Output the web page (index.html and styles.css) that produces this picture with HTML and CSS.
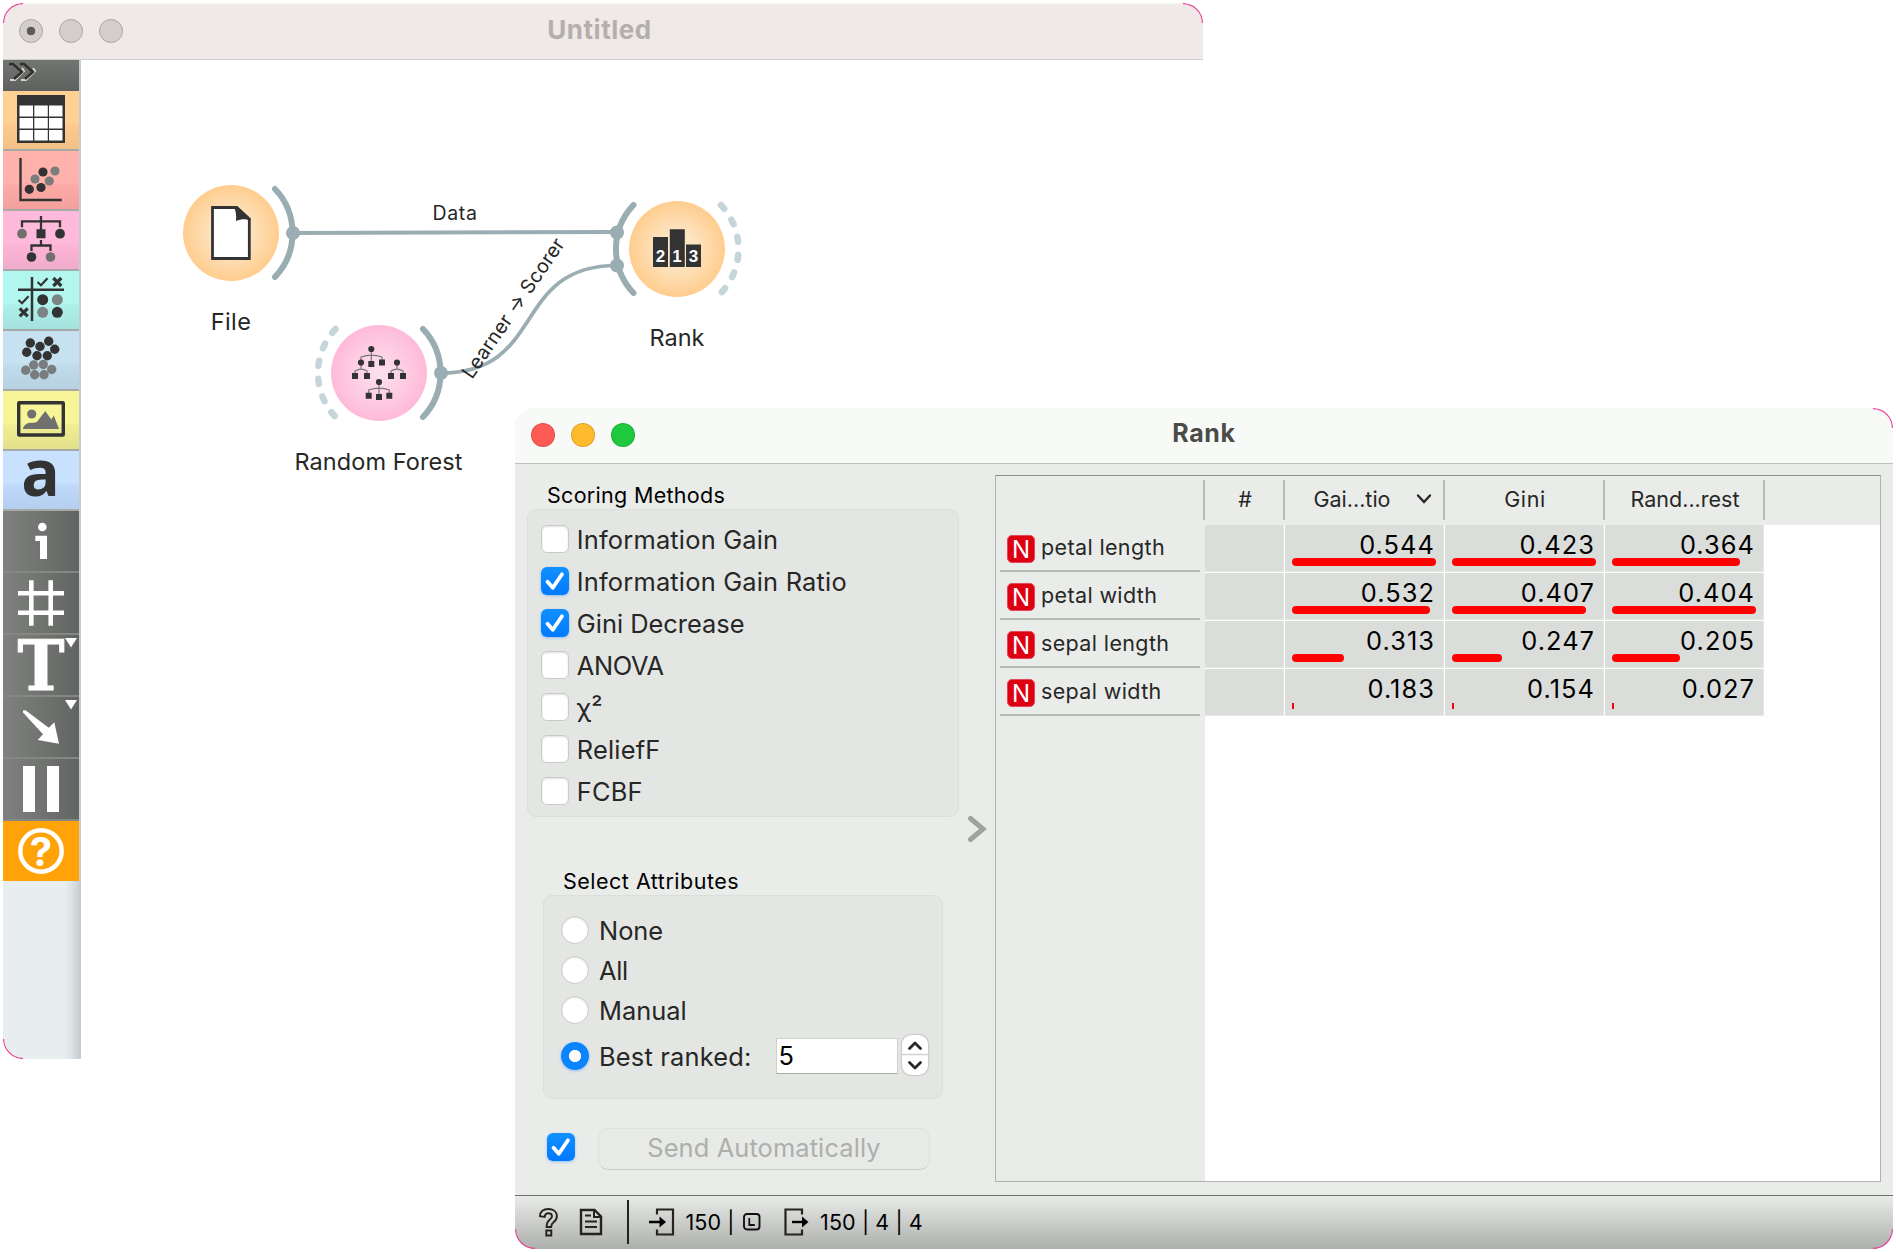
FILE: index.html
```html
<!DOCTYPE html>
<html lang="en">
<head>
<meta charset="utf-8">
<title>Untitled</title>
<link rel="stylesheet" href="styles.css">
</head>
<body>
<main class="desktop">

<section class="window workflow">
  <header class="titlebar titlebar-inactive">
    <div class="lights"><i class="light light-off light-edited"></i><i class="light light-off"></i><i class="light light-off"></i></div>
    <h1 class="title title-doc">Untitled</h1>
  </header>
  <div class="workspace">
    <nav class="toolbox">
      <div class="collapse">
        <svg width="76" height="31" viewBox="0 0 76 31" fill="none"><g stroke="#d4d6d3" stroke-width="2"><path d="M7 20h5l9-9-2-3M18 20h5l9-9-2-3"/></g><g stroke="#2f302e" stroke-width="2.4"><path d="M6 4h4l9 8-8 7M17 4h4l9 8-8 7"/></g></svg>
      </div>
      <button class="tool tool-data"><svg viewBox="0 0 76 58"><path fill="#333" d="M14 4h48v48H14z"/><path fill="#fff" d="M16.500 14.500h13.500v11H16.500zM31.300 14.500h13.500v11H31.300zM46 14.500h13.500v11H46zM16.500 27h13.500v10.500H16.500zM31.300 27h13.500v10.500H31.300zM46 27h13.500v10.500H46zM16.500 39h13.500v10.500H16.500zM31.300 39h13.500v10.500H31.300zM46 39h13.500v10.500H46z"/></svg></button>
      <button class="tool tool-visualize"><svg viewBox="0 0 76 58"><path d="M17.500 7v42h41.200" fill="none" stroke="#333" stroke-width="2.400"/><g fill="#333"><circle cx="26.300" cy="38.300" r="4.600"/><circle cx="38" cy="36.500" r="4.600"/><circle cx="40" cy="21" r="4.600"/></g><g fill="#7b7d7c"><circle cx="32" cy="28" r="4.600"/><circle cx="46.300" cy="30" r="4.600"/><circle cx="52" cy="20" r="4.600"/></g></svg></button>
      <button class="tool tool-model"><svg viewBox="0 0 76 58"><path d="M38 5v18M19 16.300V10.300h38v6M38 29v6M28.500 40v-5.500h19V40" fill="none" stroke="#333" stroke-width="2.300"/><path fill="#333" d="M33.500 18.200h9v9h-9z"/><circle cx="19" cy="22.700" r="4.900" fill="#70716f"/><circle cx="57" cy="22.700" r="4.900" fill="#333"/><circle cx="28.500" cy="46" r="4.800" fill="#333"/><circle cx="47.500" cy="46" r="4.800" fill="#70716f"/></svg></button>
      <button class="tool tool-evaluate"><svg viewBox="0 0 76 58"><g fill="none" stroke="#333"><path d="M29 6v44M15 18.700h46" stroke-width="2.500"/><path d="M34.500 11l3.500 3.300 6.500-7M15.500 29l3.500 3.300 6.500-7" stroke-width="2.200"/><path d="M50.300 7l8 8m0-8l-8 8M16.700 37.300l8 8m0-8l-8 8" stroke-width="3.200"/></g><circle cx="39.700" cy="28.700" r="5.500" fill="#333"/><circle cx="54.300" cy="28.700" r="5.500" fill="#7b8483"/><circle cx="39.700" cy="41.300" r="5.500" fill="#7b8483"/><circle cx="54.300" cy="41.300" r="5.500" fill="#333"/></svg></button>
      <button class="tool tool-unsupervised"><svg viewBox="0 0 76 58"><g fill="#333"><circle cx="27.300" cy="12" r="4.700"/><circle cx="45.700" cy="10.300" r="4.700"/><circle cx="37" cy="15.500" r="4.700"/><circle cx="23.700" cy="21.300" r="4.700"/><circle cx="51.700" cy="18.300" r="4.700"/><circle cx="34" cy="24.700" r="4.700"/><circle cx="44.300" cy="24.700" r="4.700"/></g><g fill="#7a7c7d"><circle cx="30.700" cy="34" r="4.700"/><circle cx="40.300" cy="33.500" r="4.700"/><circle cx="22.700" cy="39.300" r="4.700"/><circle cx="48.700" cy="38.500" r="4.700"/><circle cx="31.700" cy="43.700" r="4.700"/><circle cx="41" cy="43.700" r="4.700"/></g></svg></button>
      <button class="tool tool-image"><svg viewBox="0 0 76 58"><rect x="15.700" y="11.700" width="44.600" height="32.300" rx=".5" fill="none" stroke="#333" stroke-width="3.400"/><g fill="#70716f"><circle cx="28.700" cy="23" r="4.600"/><path d="M20 38v-1c1.500-3.500 4.500-5.500 8-5.300 3 .3 5-.1 6.300-1.200L42.300 20l5.900 8.600 2.600-4.200L56 38z"/></g></svg></button>
      <button class="tool tool-text"><svg viewBox="0 0 76 58"><text x="37.500" y="44.500" class="glyph-a">a</text></svg></button>
      <button class="tool tool-dark"><svg viewBox="0 0 76 60"><g fill="#fff"><circle cx="39.300" cy="16" r="4.300"/><path d="M32.300 24.700H44V48h-7V30h-4.700z"/></g></svg></button>
      <button class="tool tool-dark"><svg viewBox="0 0 76 60"><path d="M28.300 7.300v45.400M47.700 7.300v45.400M15 20.300h46M15 39.700h46" stroke="#fff" stroke-width="4.600"/></svg></button>
      <button class="tool tool-dark"><svg viewBox="0 0 76 60"><text x="38" y="55" class="glyph-t" textLength="47" lengthAdjust="spacingAndGlyphs">T</text><path fill="#fff" d="M62 3h12l-6 9.500z"/></svg></button>
      <button class="tool tool-dark"><svg viewBox="0 0 76 60"><path fill="#fff" d="M20 13.500l2.500-.3 23.200 17.500 5.600-5.400L56 46.700 34.700 43l5.300-5.700L20 15.500zM62 3h12l-6 9.500z"/></svg></button>
      <button class="tool tool-dark"><svg viewBox="0 0 76 60"><path fill="#fff" d="M20 7h12v46H20zM44 7h12v46H44z"/></svg></button>
      <button class="tool tool-help"><svg viewBox="0 0 76 60"><circle cx="38" cy="30" r="20.700" fill="none" stroke="#fff" stroke-width="4.400"/><text x="38" y="44.500" class="glyph-q">?</text></svg></button>
    </nav>
    <svg class="canvas" width="1122" height="999" viewBox="81 60 1122 999">
      <defs>
        <radialGradient id="orange"><stop offset="0" stop-color="#fdebd4"/><stop offset=".4" stop-color="#fde3c0"/><stop offset="1" stop-color="#ffcd8e"/></radialGradient>
        <radialGradient id="pink"><stop offset="0" stop-color="#fbe0ed"/><stop offset=".4" stop-color="#fdd3e6"/><stop offset="1" stop-color="#ffbad9"/></radialGradient>
      </defs>
      <g fill="none" stroke="#9aadb3" stroke-width="4">
        <path d="M293 233L617 232"/>
        <path stroke-width="3.700" d="M441 373C547 373 511 265.500 617 265.500"/>
      </g>
      <g fill="none" stroke="#9aadb3" stroke-width="6" stroke-linecap="round">
        <path d="M275 189A64 64 0 0 1 275 277"/>
        <path d="M423 329A64 64 0 0 1 423 417"/>
        <path d="M633.500 205A64 64 0 0 0 633.500 293"/>
      </g>
      <g fill="none" stroke="#c6d4db" stroke-width="6.500" stroke-linecap="round" stroke-dasharray="5 13.100">
        <path d="M335.500 329A64 64 0 0 0 335.500 417"/>
        <path d="M721 205A64 64 0 0 1 721 293"/>
      </g>
      <g fill="#9aadb3"><circle cx="293" cy="233" r="7"/><circle cx="441" cy="373" r="7"/><circle cx="617" cy="232.500" r="7"/><circle cx="617" cy="265.500" r="7"/></g>
      <circle cx="231" cy="233" r="48" fill="url(#orange)"/>
      <circle cx="379" cy="373" r="48" fill="url(#pink)"/>
      <circle cx="677" cy="249" r="48" fill="url(#orange)"/>
      <path d="M212.500 207.500h24.300L249.300 219v39.500h-36.800z" fill="#fff" stroke="#333" stroke-width="2.800"/>
      <path d="M234 207h3.500l13 11.500v2.500c-4-2.500-9-2.500-14.500 0 .6-6-.4-10.500-2-14z" fill="#333"/>
      <g fill="none" stroke="#777" stroke-width="1.200">
        <path d="M371.300 349v14M361 362v-5q5-1.800 10.300-1.800T382 357v5M361 362v7M355 376v-5q3-1.800 6-1.800t6 1.800v5M397 362v7M391 376v-5q3-1.800 6-1.800t6 1.800v5M379 382v14M368.700 395v-5q5-1.800 10.300-1.800t10.300 1.800v5"/>
      </g>
      <g fill="#333"><circle cx="371.300" cy="349" r="3.100"/><circle cx="361" cy="362.500" r="3.100"/><circle cx="397" cy="362.500" r="3.100"/><circle cx="379" cy="382" r="3.100"/>
        <path d="M368.300 361h6v6h-6zM379 359.500h6v6h-6zM352 373h6v6h-6zM364 373h6v6h-6zM388 373h6v6h-6zM400 373h6v6h-6zM365.700 392.700h6v6h-6zM376 394h6v6h-6zM386.300 392.700h6v6h-6z"/></g>
      <path d="M653 237h15v30h-15zM669.800 229.300h15V267h-15zM686 244.500h15V267h-15z" fill="#333"/>
      <g class="podium"><text x="660.600" y="261.700">2</text><text x="677" y="261.700">1</text><text x="693.600" y="261.700">3</text></g>
      <g class="node-label">
        <text x="231" y="330" letter-spacing=".4">File</text>
        <text x="378.500" y="470" letter-spacing=".08">Random Forest</text>
        <text x="677" y="345.700">Rank</text>
      </g>
      <g class="link-label">
        <text x="455" y="220">Data</text>
        <text class="link-label-start" transform="translate(472 380) rotate(-55.500)">Learner → Scorer</text>
      </g>
    </svg>
  </div>
  <svg class="corner corner-tl" viewBox="0 0 20 20"><path d="M.5 20A19.500 19.500 0 0 1 20 .5"/></svg>
  <svg class="corner corner-tr" viewBox="0 0 20 20"><path d="M0 .5A19.500 19.500 0 0 1 19.500 20"/></svg>
  <svg class="corner corner-bl" viewBox="0 0 20 20"><path d="M.5 0A19.500 19.500 0 0 0 20 19.500"/></svg>
</section>

<section class="window rank">
  <header class="titlebar">
    <div class="lights"><i class="light light-close"></i><i class="light light-min"></i><i class="light light-zoom"></i></div>
    <h2 class="title">Rank</h2>
  </header>
  <div class="body">
    <aside class="controls">
      <h3 class="group-title">Scoring Methods</h3>
      <div class="group scoring">
        <label class="option"><span class="check"></span><span class="option-text spaced">Information Gain</span></label>
        <label class="option"><span class="check on"><svg viewBox="0 0 28 28"><path d="M6.500 14.800l5.300 6L21 7.200"/></svg></span><span class="option-text spaced">Information Gain Ratio</span></label>
        <label class="option"><span class="check on"><svg viewBox="0 0 28 28"><path d="M6.500 14.800l5.300 6L21 7.200"/></svg></span><span class="option-text">Gini Decrease</span></label>
        <label class="option"><span class="check"></span><span class="option-text tight">ANOVA</span></label>
        <label class="option"><span class="check"></span><span class="option-text">χ²</span></label>
        <label class="option"><span class="check"></span><span class="option-text spaced">ReliefF</span></label>
        <label class="option"><span class="check"></span><span class="option-text spaced">FCBF</span></label>
      </div>
      <h3 class="group-title select-title">Select Attributes</h3>
      <div class="group select">
        <label class="option"><span class="radio"></span><span class="option-text">None</span></label>
        <label class="option"><span class="radio"></span><span class="option-text tight">All</span></label>
        <label class="option"><span class="radio"></span><span class="option-text">Manual</span></label>
        <div class="option best"><span class="radio on"></span><span class="option-text spaced">Best ranked:</span>
          <span class="number">5</span>
          <span class="stepper"><svg viewBox="0 0 26 40"><path d="M0 19.500h26" stroke="#d2d3d1" stroke-width="1.500"/><path d="M7.500 13.500L13 8l5.500 5.500M7.500 27.500L13 33l5.500-5.500" fill="none" stroke="#262726" stroke-width="2.800" stroke-linecap="round" stroke-linejoin="round"/></svg></span>
        </div>
      </div>
      <div class="send"><span class="check on"><svg viewBox="0 0 28 28"><path d="M6.500 14.800l5.300 6L21 7.200"/></svg></span><button class="send-button">Send Automatically</button></div>
    </aside>
    <div class="splitter"><svg width="20" height="28" viewBox="0 0 20 28"><path d="M3.500 3.500L16 14 3.500 24.500" fill="none" stroke="#a0a29f" stroke-width="5" stroke-linecap="round"/></svg></div>
    <div class="table">
      <div class="row head">
        <div class="stub"></div>
        <div class="col narrow">#</div>
        <div class="col sorted"><span>Gai...tio</span><svg width="16" height="12" viewBox="0 0 16 12"><path d="M2 2.500L8 9l6-6.500" fill="none" stroke="#262726" stroke-width="2.400" stroke-linecap="round"/></svg></div>
        <div class="col gini">Gini</div>
        <div class="col">Rand...rest</div>
      </div>
      <div class="row">
        <div class="name"><span class="badge">N</span>petal length</div>
        <div class="cell narrow"></div>
        <div class="cell">0.544<i class="bar" style="width:144px"></i></div>
        <div class="cell">0.423<i class="bar" style="width:144px"></i></div>
        <div class="cell">0.364<i class="bar" style="width:128px"></i></div>
      </div>
      <div class="row">
        <div class="name"><span class="badge">N</span>petal width</div>
        <div class="cell narrow"></div>
        <div class="cell">0.532<i class="bar" style="width:138px"></i></div>
        <div class="cell">0.407<i class="bar" style="width:134px"></i></div>
        <div class="cell">0.404<i class="bar" style="width:144px"></i></div>
      </div>
      <div class="row">
        <div class="name"><span class="badge">N</span>sepal length</div>
        <div class="cell narrow"></div>
        <div class="cell">0.313<i class="bar" style="width:52px"></i></div>
        <div class="cell">0.247<i class="bar" style="width:50px"></i></div>
        <div class="cell">0.205<i class="bar" style="width:68px"></i></div>
      </div>
      <div class="row">
        <div class="name"><span class="badge">N</span>sepal width</div>
        <div class="cell narrow"></div>
        <div class="cell">0.183<i class="bar bar-min"></i></div>
        <div class="cell">0.154<i class="bar bar-min"></i></div>
        <div class="cell">0.027<i class="bar bar-min"></i></div>
      </div>
      <div class="stub-fill"></div>
    </div>
  </div>
  <footer class="status">
    <svg class="s-help" width="22" height="30" viewBox="0 0 22 30"><g fill="none" stroke="#262221" stroke-width="1.900"><path d="M2 9.300C2 4.500 5.500 2 10.300 2c5 0 8.600 2.700 8.600 7 0 3-1.500 4.900-3.600 6.600-1.800 1.400-2.100 2-2.100 4.400H8.600c0-3.800.6-5.300 3-7.200 1.500-1.200 2.400-2.100 2.400-3.600 0-1.900-1.400-3-3.500-3-2.400 0-3.700 1.300-3.800 3.800z"/><path d="M8.300 23.500h5v5h-5z"/></g></svg>
    <svg class="s-doc" width="24" height="28" viewBox="0 0 24 28"><g fill="none" stroke="#262221"><path d="M2 2h13.500L22 8.500V26H2z" stroke-width="2.400"/><path d="M15 2v7h7" stroke-width="2"/><path d="M6 7.500h6M6 13.500h12M6 19h12" stroke-width="1.800"/></g></svg>
    <i class="s-sep"></i>
    <svg class="s-in" width="26" height="28" viewBox="0 0 26 28"><path d="M8 6.500V1.500h16v25H8v-5" fill="none" stroke="#262221" stroke-width="2.200"/><path d="M0 14h12" stroke="#000" stroke-width="2.400"/><path d="M10.500 8.500L17 14l-6.500 5.500z"/></svg>
    <span class="s-text">150 |</span>
    <svg class="s-learner" width="18" height="18" viewBox="0 0 18 18"><rect x="1" y="1" width="15.500" height="15.500" rx="3" fill="none" stroke="#111" stroke-width="1.900"/><path d="M6.300 5v7h5.500" fill="none" stroke="#111" stroke-width="1.800"/></svg>
    <svg class="s-out" width="26" height="28" viewBox="0 0 26 28"><path d="M18 6.500V1.500H1.500v25H18v-5" fill="none" stroke="#262221" stroke-width="2.200"/><path d="M8 14h12" stroke="#000" stroke-width="2.400"/><path d="M18 8.500l6.500 5.500-6.500 5.500z"/></svg>
    <span class="s-text">150 | 4 | 4</span>
  </footer>
  <svg class="corner corner-tr" viewBox="0 0 20 20"><path d="M0 .5A19.500 19.500 0 0 1 19.500 20"/></svg>
  <svg class="corner corner-bl" viewBox="0 0 20 20"><path d="M.5 0A19.500 19.500 0 0 0 20 19.500"/></svg>
  <svg class="corner corner-br" viewBox="0 0 20 20"><path d="M19.500 0A19.500 19.500 0 0 1 0 19.500"/></svg>
</section>

</main>
</body>
</html>
```
FILE: styles.css
```css
* { box-sizing: border-box; }
body { margin: 0; background: #fff; font-family: Inter, "Liberation Sans", sans-serif; color: #262726; }
h1, h2, h3 { margin: 0; font-weight: 400; }
button { border: 0; padding: 0; font: inherit; }
svg { display: block; flex: none; }
.desktop { position: relative; width: 1896px; height: 1252px; overflow: hidden; }

/* windows */
.window { position: absolute; display: flex; flex-direction: column; }
.workflow { left: 3px; top: 3px; width: 1200px; height: 1056px; background: #fff; border-radius: 20px 20px 0 20px; overflow: hidden; }
.rank { left: 515px; top: 408px; width: 1378px; height: 841px; background: #eaece9; border-radius: 20px; overflow: hidden; }
.titlebar { flex: none; display: grid; grid-template-columns: 120px 1fr 120px; align-items: center; height: 56px; padding: 0 16px 2px; background: #f8faf7; border-bottom: 1px solid #bec0bd; }
.titlebar-inactive { height: 57px; padding-bottom: 0; background: #efeae7; border-top: 2px solid #f5f1ef; border-bottom-color: #ccd0ce; }
.lights { display: flex; gap: 16px; padding-top: 1px; }
.titlebar-inactive .lights { padding: 0 0 3px; }
.light { width: 24px; height: 24px; border-radius: 50%; border: 1px solid rgba(0, 0, 0, .12); }
.light-off { background: #d3cecc; border-color: #aaa6a4; }
.light-edited { background: radial-gradient(circle, #5d5b59 0 4px, #d3cecc 4.600px); }
.light-close { background: #ff5b55; }
.light-min { background: #fdbb2d; }
.light-zoom { background: #1fc93e; }
.title { text-align: center; font-size: 25px; line-height: 30px; font-weight: 700; letter-spacing: .6px; color: #4b4c4a; margin-top: -3px; }
.title-doc { font-size: 26px; letter-spacing: .5px; color: #b4afad; padding-right: 7px; margin-top: -4px; }
.corner { position: absolute; width: 20px; height: 20px; fill: none; stroke: #f0419a; stroke-width: 1.300; }
.corner-tl { left: 0; top: 0; }
.corner-tr { right: 0; top: 0; }
.corner-bl { left: 0; bottom: 0; }
.corner-br { right: 0; bottom: 0; }

/* toolbox */
.workspace { flex: 1; display: flex; }
.toolbox { width: 78px; border-right: 2px solid #c5cdd1; background: linear-gradient(90deg, #e8edf0 62px, #dee3e6 68px, #c9cfd3 76px); }
.collapse { height: 31px; background: linear-gradient(#737573, #5f615f); }
.tool { display: block; width: 76px; height: 60px; border-bottom: 2px solid #a7a9a6; }
.tool svg { width: 76px; overflow: visible; }
.tool-data { background: linear-gradient(#ffd093 55%, #fdc98c 60%, #f3c087); }
.tool-visualize { background: linear-gradient(#ffb1ac 55%, #fdaaa6 60%, #f3a19d); }
.tool-model { background: linear-gradient(#ffbadb 55%, #fdb5d6 60%, #f0abcb); }
.tool-evaluate { background: linear-gradient(#b1f6ef 55%, #adefe9 60%, #a5e2dd); }
.tool-unsupervised { background: linear-gradient(#c6e2f1 55%, #c0dbea 60%, #b7d1e0); }
.tool-image { background: linear-gradient(#f7f598 55%, #f0ee93 60%, #e2e08a); }
.tool-text { background: linear-gradient(#c7e1ff 55%, #bfd9f9 60%, #b5ceef); }
.tool-dark { height: 62px; background: linear-gradient(90deg, #7f817e, #6d6f6c 65%, #626461); border-bottom-color: #858784; }
.tool-help { background: #ffa309; border-bottom: 0; }
.glyph-a { font: 700 64px "Open Sans", sans-serif; text-anchor: middle; fill: #333; }
.glyph-t { font: 700 69px "DejaVu Serif", serif; text-anchor: middle; fill: #fff; stroke: #fff; stroke-width: 1; }
.glyph-q { font: 700 40px Inter, sans-serif; text-anchor: middle; fill: #fff; }

/* workflow canvas */
.node-label { font-size: 23.500px; text-anchor: middle; fill: #262726; }
.link-label { font-size: 19.500px; letter-spacing: .7px; text-anchor: middle; fill: #262726; }
.link-label-start { text-anchor: start; letter-spacing: .2px; }
.podium { font: 700 17px "Liberation Sans", sans-serif; text-anchor: middle; fill: #fff; }

/* rank controls */
.body { flex: 1; display: flex; min-height: 0; }
.controls { width: 444px; padding: 16px 0 0 12px; }
.group-title { padding-left: 20px; font-size: 21.500px; line-height: 30px; height: 29px; letter-spacing: .3px; color: #000; }
.group { border: 1.500px solid #dcdedb; border-radius: 9px; background: #e4e6e3; }
.scoring { height: 308px; padding: 7.500px 0 0 12.500px; }
.option { display: flex; align-items: center; height: 42px; font-size: 25.400px; line-height: 30px; }
.option-text { padding: 2px 0 0 8.300px; }
.spaced { letter-spacing: .2px; }
.tight { letter-spacing: -.3px; }
.check, .radio { flex: none; width: 28px; height: 28px; background: #fff; border: 1px solid #c9cbc8; border-radius: 6px; box-shadow: inset 0 1px 2px rgba(0, 0, 0, .12); }
.radio { border-radius: 50%; }
.check.on, .radio.on { border: 0; background: linear-gradient(#1290ff, #007aff); box-shadow: 0 1px 3px rgba(0, 110, 255, .35); }
.radio.on { background: radial-gradient(circle, #fff 0 5.700px, #0a84ff 6.400px); }
.check path { fill: none; stroke: #fff; stroke-width: 3.800; stroke-linecap: round; stroke-linejoin: round; }
.select-title { margin-top: 49px; padding-left: 36px; letter-spacing: .5px; }
.select { width: 400px; height: 204px; margin-left: 16px; padding: 14px 0 0 16.500px; }
.select .option { height: 40px; }
.select .option-text { padding-left: 10.500px; }
.select .best { margin-top: 6px; }
.best .option-text { width: 187px; }
.number { width: 122px; height: 36px; margin-top: -1px; padding: 2px 2px; background: #fff; border: 1px solid #cfd1ce; border-bottom: 1.500px solid #a9aba8; color: #000; }
.stepper { width: 26px; height: 40px; margin: -2px 0 0 4px; border-radius: 9px; background: #fff; box-shadow: 0 0 2px rgba(0, 0, 0, .4); }
.send { display: flex; align-items: center; gap: 23px; margin: 29px 0 0 20px; }
.send .check { margin-bottom: 4px; }
.send-button { width: 332px; height: 42px; padding-bottom: 3px; border: 1px solid #dfe1de; border-bottom-color: #cbcdca; border-radius: 10px; background: #e8eae7; font-size: 25.400px; letter-spacing: .12px; color: #adafac; }
.splitter { width: 36px; padding: 351px 0 0 8px; }

/* ranking table */
.table { width: 886px; height: 707px; margin-top: 11px; border: 1px solid #b1b3b0; border-top-color: #8b8d8a; background: #fff; display: flex; flex-direction: column; }
.row { display: grid; grid-template-columns: 209px 80px 160px 160px 160px; height: 48px; }
.head { flex: none; height: 49px; padding-top: 4px; background: #eaece9; font-size: 21.500px; }
.stub, .col { height: 40px; border-right: 2px solid #b9bbb8; }
.col { display: flex; align-items: center; justify-content: center; padding: 0 0 3px 2px; }
.gini { letter-spacing: .6px; }
.sorted { gap: 25px; padding-left: 17px; }
.name { display: flex; align-items: center; gap: 6px; padding: 0 0 4px 11px; background: #eaece9; font-size: 21.500px; letter-spacing: .37px; position: relative; }
.name::after { content: ""; position: absolute; left: 4px; bottom: 1px; width: 200px; height: 2px; background: #b9bbb8; }
.badge { width: 28px; height: 28px; margin-top: 4px; border-radius: 5px; border: 1px solid #e8485c; background: #de0010; color: #fff; font-size: 24px; line-height: 28px; text-align: center; letter-spacing: 0; }
.cell { position: relative; padding: 5px 9px 0 0; text-align: right; font-size: 25.400px; line-height: 30px; letter-spacing: 1.050px; color: #000; background: #dbdddb; border-right: 1px solid #fff; border-bottom: 1px solid #fff; box-shadow: inset -1px -1px #e5e7e5; }
.bar { position: absolute; left: 7px; top: 33px; height: 8px; border-radius: 4px; background: #f00; }
.bar-min { width: 2px; height: 6px; top: 34px; border-radius: 0; }
.stub-fill { flex: 1; width: 209px; background: #eaece9; }

/* status bar */
.status { height: 54px; flex: none; display: flex; align-items: center; padding: 0 0 1px 23px; border-top: 1px solid #6b6d6a; background: linear-gradient(#e9ebe8, #adafac); }
.s-doc { margin-left: 19px; }
.s-sep { width: 1.500px; height: 44px; margin-left: 24px; background: #222; }
.s-in { margin-left: 20px; }
.s-text { font-size: 21.500px; letter-spacing: .1px; color: #000; margin: -1px 0 0 11px; }
.s-learner { margin-left: 8.500px; }
.s-out { margin-left: 23px; }
.s-out + .s-text { margin-left: 10px; }
```
